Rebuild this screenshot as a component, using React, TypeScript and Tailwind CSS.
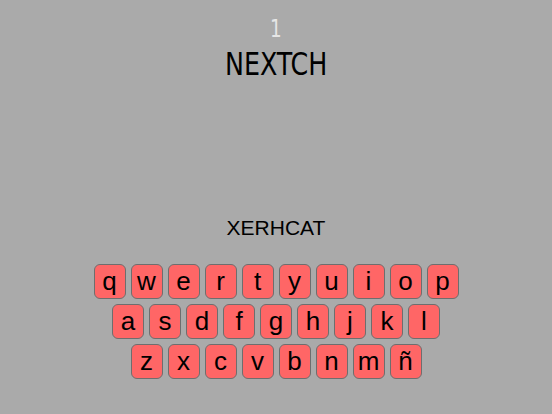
const rows = [
  ['q', 'w', 'e', 'r', 't', 'y', 'u', 'i', 'o', 'p'],
  ['a', 's', 'd', 'f', 'g', 'h', 'j', 'k', 'l'],
  ['z', 'x', 'c', 'v', 'b', 'n', 'm', 'ñ'],
]

function Key({ letter }: { letter: string }) {
  return (
    <button className="flex h-[35px] w-[32px] items-center justify-center rounded-[6px] border border-[#6e6e6e] bg-[#ff6666] pb-[2px] text-[26px] leading-none text-black">
      {letter}
    </button>
  )
}

export default function App() {
  return (
    <div
      className="flex h-[414px] w-[552px] flex-col items-center bg-[#aaaaaa]"
      style={{ fontFamily: '"Liberation Sans", Arial, sans-serif' }}
    >
      <div
        className="mt-[17px] scale-x-[0.85] text-[24px] leading-[24px] text-[#e6e6e6]"
        style={{ fontFamily: '"DejaVu Sans Condensed", sans-serif' }}
      >
        1
      </div>
      <div
        className="mt-[7px] scale-x-[0.88] text-[32px] leading-[32px] text-black"
        style={{ fontFamily: '"DejaVu Sans Condensed", sans-serif' }}
      >
        NEXTCH
      </div>

      <div className="mt-[137px] text-[21px] leading-[21px] text-black">XERHCAT</div>

      <div className="mt-[26px] flex flex-col items-center gap-[5px]">
        {rows.map((row, i) => (
          <div key={i} className="flex gap-[5px]">
            {row.map((l) => (
              <Key key={l} letter={l} />
            ))}
          </div>
        ))}
      </div>
    </div>
  )
}
